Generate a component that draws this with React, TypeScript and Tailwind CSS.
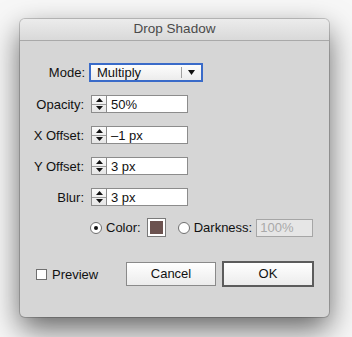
import React from "react";

const font = { fontFamily: '"Liberation Sans", Arial, sans-serif' };

function Stepper() {
  return (
    <div className="flex flex-col w-[16px] h-[18px] border border-[#8c8c8c] bg-gradient-to-b from-[#fbfbfb] to-[#e6e6e6]">
      <div className="flex-1 flex items-center justify-center border-b border-[#9a9a9a]">
        <svg width="7" height="4" viewBox="0 0 7 4"><path d="M3.5 0L7 4H0z" fill="#111" /></svg>
      </div>
      <div className="flex-1 flex items-center justify-center">
        <svg width="7" height="4" viewBox="0 0 7 4"><path d="M0 0h7L3.5 4z" fill="#111" /></svg>
      </div>
    </div>
  );
}

function NumRow({ label, value, mt }: { label: string; value: string; mt: string }) {
  return (
    <div className={`flex items-center h-[18px] ${mt}`}>
      <div className="w-[64px] text-right text-[13px] text-[#111] leading-none">{label}</div>
      <div className="ml-[7px] flex">
        <Stepper />
        <div className="w-[81px] h-[18px] border border-l-0 border-[#8c8c8c] bg-white text-[13px] text-[#111] leading-none flex items-center pl-[4px]">
          {value}
        </div>
      </div>
    </div>
  );
}

export default function App() {
  return (
    <div className="w-[352px] h-[337px] bg-[#f7f7f7] overflow-hidden pt-[19px]" style={font}>
      <div className="ml-[20px] w-[309px] h-[298px] rounded-[5px] bg-[#d6d6d6] shadow-[0_12px_30px_rgba(0,0,0,0.6),0_0_0_1px_rgba(0,0,0,0.18)] flex flex-col overflow-hidden">
        <div className="h-[22px] shrink-0 border-b border-[#a9a9a9] bg-gradient-to-b from-[#ececec] to-[#d9d9d9] flex items-center justify-center text-[13.5px] text-[#4a4a4a]">
          Drop Shadow
        </div>
        <div className="flex flex-col">
          <div className="flex items-center h-[19px] mt-[22px]">
            <div className="w-[65px] text-right text-[13px] text-[#111] leading-none">Mode:</div>
            <div className="ml-[4px] w-[114px] h-[19px] border-2 border-[#3a6bc9] bg-gradient-to-b from-[#fdfdfd] to-[#ececec] flex items-center">
              <span className="pl-[6px] text-[13px] text-[#111] leading-none flex-1">Multiply</span>
              <div className="w-px h-[11px] bg-[#a0a0a0]" />
              <svg className="mx-[6px]" width="7" height="5" viewBox="0 0 7 5"><path d="M0 0h7L3.5 5z" fill="#111" /></svg>
            </div>
          </div>
          <NumRow label="Opacity:" value="50%" mt="mt-[13px]" />
          <NumRow label="X Offset:" value="–1 px" mt="mt-[13px]" />
          <NumRow label="Y Offset:" value="3 px" mt="mt-[13px]" />
          <NumRow label="Blur:" value="3 px" mt="mt-[13px]" />
          <div className="flex items-center h-[19px] mt-[12px] ml-[70px]">
            <div className="w-[12px] h-[12px] rounded-full border border-[#6f6f6f] bg-white flex items-center justify-center">
              <div className="w-[4px] h-[4px] rounded-full bg-[#111]" />
            </div>
            <span className="ml-[4px] text-[13px] text-[#111] leading-none">Color:</span>
            <div className="ml-[6px] w-[19px] h-[19px] border border-[#7a7a7a] bg-white p-[2px]">
              <div className="w-full h-full bg-[#6c524f]" />
            </div>
            <div className="ml-[12px] w-[12px] h-[12px] rounded-full border border-[#6f6f6f] bg-white" />
            <span className="ml-[4px] text-[13px] text-[#111] leading-none">Darkness:</span>
            <div className="ml-[4px] w-[57px] h-[18px] border border-[#a6a6a6] bg-[#e6e6e6] text-[13px] text-[#a9a9a9] leading-none flex items-center pl-[3px]">
              100%
            </div>
          </div>
          <div className="flex items-center h-[26px] mt-[24px]">
            <div className="ml-[16px] w-[11px] h-[11px] border border-[#6f6f6f] bg-white" />
            <span className="ml-[5px] text-[13px] text-[#111] leading-none">Preview</span>
            <div className="ml-auto mr-[15px] flex items-center gap-[6px]">
              <div className="w-[90px] h-[24px] border border-[#8a8a8a] bg-gradient-to-b from-[#ffffff] to-[#ececec] flex items-center justify-center text-[13px] text-[#111]">
                Cancel
              </div>
              <div className="w-[92px] h-[26px] border-2 border-[#5c5c5c] bg-gradient-to-b from-[#ffffff] to-[#ececec] flex items-center justify-center text-[13px] text-[#111]">
                OK
              </div>
            </div>
          </div>
        </div>
      </div>
    </div>
  );
}
